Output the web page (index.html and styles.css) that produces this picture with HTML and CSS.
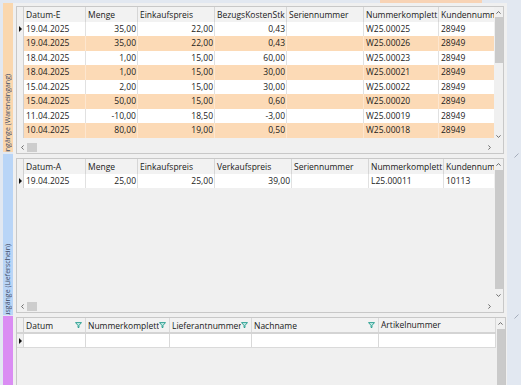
FILE: index.html
```html
<!DOCTYPE html>
<html lang="de">
<head>
<meta charset="utf-8">
<title>Lager</title>
<link rel="stylesheet" href="styles.css">
</head>
<body>
<div class="topbar"><div class="toptab"></div></div>
<div class="main">
  <div class="tabs">
    <div class="tab tab-in"><span>Eingänge (Wareneingang)</span></div>
    <div class="tab tab-out"><span>Ausgänge (Lieferschein)</span></div>
    <div class="tab tab-x"></div>
  </div>
  <div class="content">
    <div class="grid g1">
      <div class="table">
        <div class="row head">
          <div class="c rh"></div><div class="c">Datum-E</div><div class="c">Menge</div><div class="c">Einkaufspreis</div><div class="c">BezugsKostenStk</div><div class="c">Seriennummer</div><div class="c">Nummerkomplett</div><div class="c">Kundennummer</div>
        </div>
        <div class="row"><div class="c rh"><i class="cur"></i></div><div class="c">19.04.2025</div><div class="c r">35,00</div><div class="c r">22,00</div><div class="c r">0,43</div><div class="c"></div><div class="c">W25.00025</div><div class="c">28949</div></div>
        <div class="row alt"><div class="c rh"></div><div class="c">19.04.2025</div><div class="c r">35,00</div><div class="c r">22,00</div><div class="c r">0,43</div><div class="c"></div><div class="c">W25.00026</div><div class="c">28949</div></div>
        <div class="row"><div class="c rh"></div><div class="c">18.04.2025</div><div class="c r">1,00</div><div class="c r">15,00</div><div class="c r">60,00</div><div class="c"></div><div class="c">W25.00023</div><div class="c">28949</div></div>
        <div class="row alt"><div class="c rh"></div><div class="c">18.04.2025</div><div class="c r">1,00</div><div class="c r">15,00</div><div class="c r">30,00</div><div class="c"></div><div class="c">W25.00021</div><div class="c">28949</div></div>
        <div class="row"><div class="c rh"></div><div class="c">15.04.2025</div><div class="c r">2,00</div><div class="c r">15,00</div><div class="c r">30,00</div><div class="c"></div><div class="c">W25.00022</div><div class="c">28949</div></div>
        <div class="row alt"><div class="c rh"></div><div class="c">15.04.2025</div><div class="c r">50,00</div><div class="c r">15,00</div><div class="c r">0,60</div><div class="c"></div><div class="c">W25.00020</div><div class="c">28949</div></div>
        <div class="row"><div class="c rh"></div><div class="c">11.04.2025</div><div class="c r">-10,00</div><div class="c r">18,50</div><div class="c r">-3,00</div><div class="c"></div><div class="c">W25.00019</div><div class="c">28949</div></div>
        <div class="row alt"><div class="c rh"></div><div class="c">10.04.2025</div><div class="c r">80,00</div><div class="c r">19,00</div><div class="c r">0,50</div><div class="c"></div><div class="c">W25.00018</div><div class="c">28949</div></div>
      </div>
      <div class="vscroll">
        <div class="varr"><svg width="5" height="3" viewBox="0 0 5 3"><path d="M0.4 2.6L2.5 0.6L4.6 2.6" fill="none" stroke="#606060" stroke-width="0.9"/></svg></div>
        <div class="vthumb t1"></div>
        <div class="spacer"></div>
        <div class="varr"><svg width="5" height="3" viewBox="0 0 5 3"><path d="M0.4 0.4L2.5 2.4L4.6 0.4" fill="none" stroke="#606060" stroke-width="0.9"/></svg></div>
      </div>
      <div class="hscroll">
        <div class="harr"><svg width="3" height="5" viewBox="0 0 3 5"><path d="M2.6 0.4L0.6 2.5L2.6 4.6" fill="none" stroke="#606060" stroke-width="0.9"/></svg></div>
        <div class="hthumb"></div>
        <div class="spacer"></div>
        <div class="harr"><svg width="3" height="5" viewBox="0 0 3 5"><path d="M0.4 0.4L2.4 2.5L0.4 4.6" fill="none" stroke="#606060" stroke-width="0.9"/></svg></div>
      </div>
      <div class="corner"></div>
    </div>

    <div class="grid g2">
      <div class="table">
        <div class="row head">
          <div class="c rh"></div><div class="c">Datum-A</div><div class="c">Menge</div><div class="c">Einkaufspreis</div><div class="c">Verkaufspreis</div><div class="c">Seriennummer</div><div class="c">Nummerkomplett</div><div class="c">Kundennummer</div>
        </div>
        <div class="row"><div class="c rh"><i class="cur"></i></div><div class="c">19.04.2025</div><div class="c r">25,00</div><div class="c r">25,00</div><div class="c r">39,00</div><div class="c"></div><div class="c">L25.00011</div><div class="c">10113</div></div>
      </div>
      <div class="vscroll">
        <div class="varr"><svg width="5" height="3" viewBox="0 0 5 3"><path d="M0.4 2.6L2.5 0.6L4.6 2.6" fill="none" stroke="#606060" stroke-width="0.9"/></svg></div>
        <div class="vthumb tfill"></div>
        <div class="varr"><svg width="5" height="3" viewBox="0 0 5 3"><path d="M0.4 0.4L2.5 2.4L4.6 0.4" fill="none" stroke="#606060" stroke-width="0.9"/></svg></div>
      </div>
      <div class="hscroll">
        <div class="harr"><svg width="3" height="5" viewBox="0 0 3 5"><path d="M2.6 0.4L0.6 2.5L2.6 4.6" fill="none" stroke="#606060" stroke-width="0.9"/></svg></div>
        <div class="hthumb"></div>
        <div class="spacer"></div>
        <div class="harr"><svg width="3" height="5" viewBox="0 0 3 5"><path d="M0.4 0.4L2.4 2.5L0.4 4.6" fill="none" stroke="#606060" stroke-width="0.9"/></svg></div>
      </div>
      <div class="corner"></div>
    </div>

    <div class="grid g3">
      <div class="table">
        <div class="row head">
          <div class="c rh"></div>
          <div class="c hf"><span>Datum</span><svg class="flt" width="7" height="6" viewBox="0 0 7 6"><path d="M0.5 0.6H6.5L4 3.4V5.5H3V3.4Z" fill="#c6ece6" stroke="#1f9a8b" stroke-width="0.9"/></svg></div>
          <div class="c hf"><span>Nummerkomplett</span><svg class="flt" width="7" height="6" viewBox="0 0 7 6"><path d="M0.5 0.6H6.5L4 3.4V5.5H3V3.4Z" fill="#c6ece6" stroke="#1f9a8b" stroke-width="0.9"/></svg></div>
          <div class="c hf"><span>Lieferantnummer</span><svg class="flt" width="7" height="6" viewBox="0 0 7 6"><path d="M0.5 0.6H6.5L4 3.4V5.5H3V3.4Z" fill="#c6ece6" stroke="#1f9a8b" stroke-width="0.9"/></svg></div>
          <div class="c hf"><span>Nachname</span><svg class="flt" width="7" height="6" viewBox="0 0 7 6"><path d="M0.5 0.6H6.5L4 3.4V5.5H3V3.4Z" fill="#c6ece6" stroke="#1f9a8b" stroke-width="0.9"/></svg></div>
          <div class="c">Artikelnummer</div>
        </div>
        <div class="row"><div class="c rh"><i class="cur"></i></div><div class="c"></div><div class="c"></div><div class="c"></div><div class="c"></div><div class="c"></div></div>
      </div>
      <div class="vscroll">
        <div class="varr"><svg width="5" height="3" viewBox="0 0 5 3"><path d="M0.4 2.6L2.5 0.6L4.6 2.6" fill="none" stroke="#606060" stroke-width="0.9"/></svg></div>
        <div class="vthumb tfill"></div>
      </div>
      <div class="hscroll"></div>
      <div class="corner"></div>
    </div>
  </div>
  <div class="gutter">
    <svg class="grip g-a" width="5" height="5" viewBox="0 0 5 5"><path d="M0.5 4.5L4.5 0.5" stroke="#9ea6b4" stroke-width="0.9"/></svg>
    <svg class="grip g-b" width="5" height="5" viewBox="0 0 5 5"><path d="M0.5 4.5L4.5 0.5" stroke="#9ea6b4" stroke-width="0.9"/></svg>
  </div>
</div>
</body>
</html>
```

FILE: styles.css
```css
html, body {
  margin: 0;
  padding: 0;
}
body {
  width: 521px;
  height: 385px;
  overflow: hidden;
  background: #e2e8f1;
  font-family: "Segoe UI", "Open Sans", "Noto Sans", sans-serif;
  font-size: 8.5px;
  color: #1b1b1b;
}
.topbar {
  height: 3px;
  display: flex;
}
.toptab {
  margin-left: 380px;
  width: 102px;
  background: #f8d3b5;
}
.main {
  display: flex;
  height: 382px;
}
.tabs {
  width: 10px;
  margin-left: 3px;
  display: flex;
  flex-direction: column;
}
.tab {
  display: flex;
  flex-direction: column;
  justify-content: flex-end;
  align-items: center;
  overflow: hidden;
}
.tab span {
  writing-mode: vertical-rl;
  transform: rotate(180deg);
  font-size: 7px;
  line-height: 10px;
  color: #3e4b66;
  white-space: nowrap;
}
.tab-in {
  height: 149px;
  background: #fad7ae;
}
.tab-in span { margin-bottom: -5px; }
.tab-out {
  height: 161px;
  margin-top: 2px;
  background: #b9d5f7;
}
.tab-out span { margin-bottom: -6.5px; }
.tab-x {
  flex: 1;
  margin-top: 1px;
  background: #da8df3;
}
.content {
  width: 494px;
  background: #f0f0f0;
  padding: 3px 0 0 3px;
  box-sizing: border-box;
  display: flex;
  flex-direction: column;
  gap: 4px;
  overflow: hidden;
}
.grid {
  flex: none;
  box-sizing: border-box;
  border: 1px solid #c8c8c8;
  background: #f0f0f0;
  display: grid;
  grid-template-columns: 477px 9px;
  grid-template-rows: 1fr 12px;
}
.g1 { width: 488px; height: 148px; }
.g2 { width: 488px; height: 155px; }
.g3 { width: 490px; height: 90px; grid-template-columns: 479px 9px; }

.table { overflow: hidden; }
.row {
  display: grid;
  height: 14.45px;
}
.g1 .row { grid-template-columns: 7px 62px 52px 77px 72px 77px 75px 90px; }
.g2 .row { grid-template-columns: 7px 62px 52px 77px 77px 77px 75px 90px; }
.g3 .row { grid-template-columns: 7px 62px 84px 82px 127px 117px; height: 14px; }
.row.head { height: 15px; }
.g3 .row.head { height: 14px; border-bottom: 2px solid #d4d4d4; }

.c {
  box-sizing: border-box;
  border-right: 1px solid #e1e1e1;
  padding: 0 1px 0 2px;
  white-space: nowrap;
  overflow: hidden;
  background: #ffffff;
  line-height: 14.45px;
}
.r { text-align: right; }
.alt .c { background: #fcdab6; border-right-color: #fde6cf; }
.head .c {
  background: #f2f2f2;
  border-right-color: #d6d6d6;
  line-height: 15px;
  color: #202020;
}
.g3 .head .c { line-height: 14px; }
.g3 .row .c { border-right-color: #d9d9d9; border-bottom: 1px solid #dadada; line-height: 13px; }
.g3 .head .c { border-bottom: none; }
.hf {
  display: flex;
  align-items: center;
  justify-content: space-between;
  padding-right: 3px;
}
.hf span { overflow: hidden; }
.flt { flex: none; }
.c.rh,
.alt .c.rh,
.head .c.rh {
  background: #f0f0f0;
  border-right-color: #d0d0d0;
  padding: 0;
  display: flex;
  align-items: center;
  justify-content: center;
}
.cur {
  display: block;
  width: 0;
  height: 0;
  border-left: 3px solid #111111;
  border-top: 3px solid transparent;
  border-bottom: 3px solid transparent;
  margin-left: 1px;
}

.vscroll {
  display: flex;
  flex-direction: column;
  background: #f0f0f0;
  overflow: hidden;
}
.varr {
  height: 10px;
  flex: none;
  display: flex;
  align-items: center;
  justify-content: center;
}
.vthumb {
  width: 8px;
  margin: 0 auto;
  background: #cacaca;
}
.t1 { height: 46px; flex: none; }
.tfill { flex: 1; margin: 1px auto; }
.spacer { flex: 1; }

.hscroll {
  display: flex;
  align-items: center;
  background: #f0f0f0;
}
.harr {
  width: 10px;
  height: 100%;
  flex: none;
  display: flex;
  align-items: center;
  justify-content: center;
}
.hthumb {
  width: 10px;
  height: 9px;
  flex: none;
  background: #cdcdcd;
}
.corner { background: #f0f0f0; }

.gutter {
  flex: 1;
  display: flex;
  flex-direction: column;
  align-items: flex-end;
  padding-right: 2px;
}
.grip { flex: none; }
.g-a { margin-top: 150px; }
.g-b { margin-top: 156px; }
```
